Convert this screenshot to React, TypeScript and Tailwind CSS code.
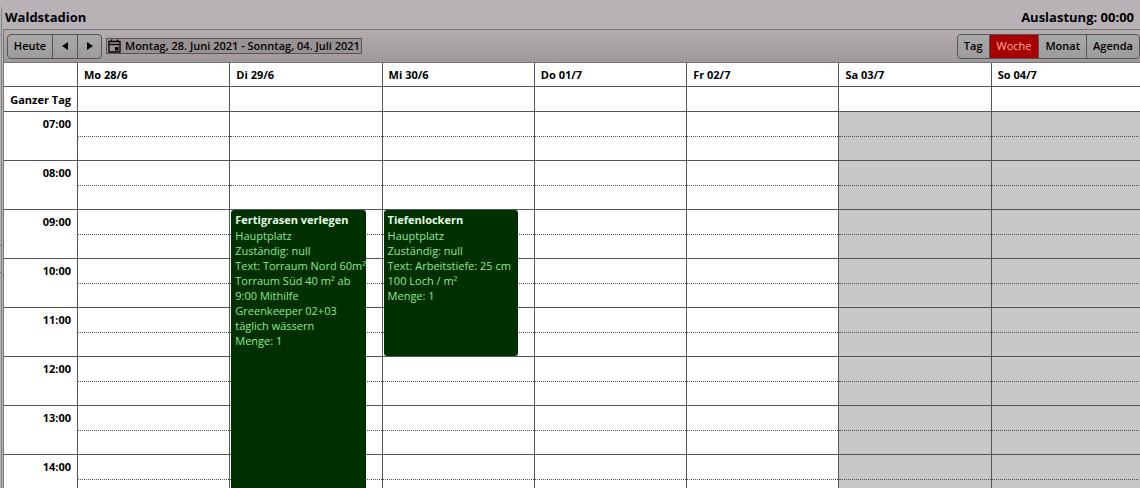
import React from 'react';
import clsx from 'clsx';

const days = ['Mo 28/6', 'Di 29/6', 'Mi 30/6', 'Do 01/7', 'Fr 02/7', 'Sa 03/7', 'So 04/7'];

const hours = ['07:00', '08:00', '09:00', '10:00', '11:00', '12:00', '13:00', '14:00'];

const views = ['Tag', 'Woche', 'Monat', 'Agenda'];

const ROW_HEIGHT = 49;

const events = [
  {
    day: 1,
    start: '09:00',
    duration: 6,
    title: 'Fertigrasen verlegen',
    lines: [
      'Hauptplatz',
      'Zuständig: null',
      'Text: Torraum Nord 60m²',
      'Torraum Süd 40 m² ab',
      '9:00 Mithilfe',
      'Greenkeeper 02+03',
      'täglich wässern',
      'Menge: 1',
    ],
  },
  {
    day: 2,
    start: '09:00',
    duration: 3,
    title: 'Tiefenlockern',
    lines: ['Hauptplatz', 'Zuständig: null', 'Text: Arbeitstiefe: 25 cm', '100 Loch / m²', 'Menge: 1'],
  },
];

type CalendarEvent = (typeof events)[number];

function CalendarIcon() {
  return (
    <svg width="13" height="14" viewBox="0 0 13 14" fill="none" stroke="#000" aria-hidden="true">
      <path d="M1 2.5h11v10.5H1z" strokeWidth="1.3" />
      <path d="M1 5.5h11" strokeWidth="1.3" />
      <path d="M3.5 0.5v2M9.5 0.5v2" strokeWidth="1.4" />
      <path d="M7 8h3.5v3.5H7z" fill="#000" stroke="none" />
    </svg>
  );
}

function EventCard({ event }: { event: CalendarEvent }) {
  return (
    <div
      className="absolute top-0 left-px z-10 w-[89%] whitespace-nowrap rounded-[3px] bg-[#003000] px-1 pt-[2px] text-[#90e690]"
      style={{ height: event.duration * ROW_HEIGHT - 1 }}
    >
      <h3 className="mb-px font-bold text-[#e4ffe4]">{event.title}</h3>
      {event.lines.map((line) => (
        <p key={line}>{line}</p>
      ))}
    </div>
  );
}

function Toolbar() {
  return (
    <div className="flex h-[34px] items-center justify-between border-y border-[#777] bg-linear-to-b from-[#b3adad] to-[#9f9999] pr-1 pl-[3px] text-[11px] font-semibold text-black">
      <div className="flex items-center gap-1">
        <div className="flex h-[25px] divide-x divide-[#555] overflow-hidden rounded border border-[#555] bg-linear-to-b from-[#a9a9a9] to-[#9c9c9c]">
          <button type="button" className="w-[45px]">Heute</button>
          <button type="button" aria-label="Zurück" className="flex w-[25px] items-center justify-center">
            <svg width="6" height="8" viewBox="0 0 6 8" aria-hidden="true">
              <path d="M6 0v8L0 4z" />
            </svg>
          </button>
          <button type="button" aria-label="Weiter" className="flex w-[23px] items-center justify-center">
            <svg width="6" height="8" viewBox="0 0 6 8" aria-hidden="true">
              <path d="M0 0v8l6-4z" />
            </svg>
          </button>
        </div>
        <a href="#datum" className="flex h-4 items-center gap-1 border border-[#555] bg-[#989292] px-px whitespace-nowrap">
          <CalendarIcon />
          Montag, 28. Juni 2021 - Sonntag, 04. Juli 2021
        </a>
      </div>
      <div className="flex h-[25px] divide-x divide-[#555] overflow-hidden rounded border border-[#555] bg-linear-to-b from-[#a9a9a9] to-[#9c9c9c]">
        {views.map((view) => (
          <button
            key={view}
            type="button"
            className={clsx('px-[6px]', view === 'Woche' && 'bg-[#a80000] px-[7px] font-normal text-[#ffb0a0]')}
          >
            {view}
          </button>
        ))}
      </div>
    </div>
  );
}

function WeekTable() {
  return (
    <table className="w-full table-fixed border-separate border-spacing-0 bg-white text-[11px] leading-[15px] text-black">
      <thead>
        <tr>
          <td className="h-6 w-[74px] border-r border-b border-[#555]" />
          {days.map((day) => (
            <th key={day} scope="col" className="border-r border-b border-[#555] px-[6px] text-left font-bold">
              {day}
            </th>
          ))}
        </tr>
      </thead>
      <tbody>
        <tr>
          <th scope="row" className="h-[25px] border-r border-b border-[#555] pr-[6px] text-right font-bold whitespace-nowrap">
            Ganzer Tag
          </th>
          {days.map((day) => (
            <td key={day} className="border-r border-b border-[#555]" />
          ))}
        </tr>
        {hours.map((hour) => (
          <tr key={hour}>
            <th scope="row" className="h-[49px] border-r border-b border-[#555] pt-1 pr-[6px] text-right align-top font-bold">
              {hour}
            </th>
            {days.map((day, index) => (
              <td
                key={day}
                className={clsx('relative border-r border-b border-[#555] p-0 align-top', index > 4 && 'bg-[#c8c8c8]')}
              >
                <div className="h-[25px] border-b border-dotted border-[#555]" />
                {events
                  .filter((event) => event.day === index && event.start === hour)
                  .map((event) => (
                    <EventCard key={event.title} event={event} />
                  ))}
              </td>
            ))}
          </tr>
        ))}
      </tbody>
    </table>
  );
}

export default function App() {
  return (
    <div className="flex h-screen overflow-hidden bg-[#b8b2b6] font-['Open_Sans','Noto_Sans',sans-serif]">
      <aside className="mt-[7px] w-[2px] shrink-0 border-r border-[#888] bg-[#b4b4b4]">
        <div className="h-7 border-b border-[#777]" />
        <div className="h-[211px] border-b border-[#777]" />
        <div className="h-[27px] border-b border-[#777]" />
      </aside>
      <div className="min-w-0 flex-1 pl-px">
        <header className="flex h-[29px] items-end justify-between pr-[6px] pb-[3px] pl-[2px] text-[13px] leading-[18px] font-bold text-black">
          <h1>Waldstadion</h1>
          <p>Auslastung: 00:00</p>
        </header>
        <main className="-mr-1 border-l border-[#777]">
          <Toolbar />
          <WeekTable />
        </main>
      </div>
    </div>
  );
}
